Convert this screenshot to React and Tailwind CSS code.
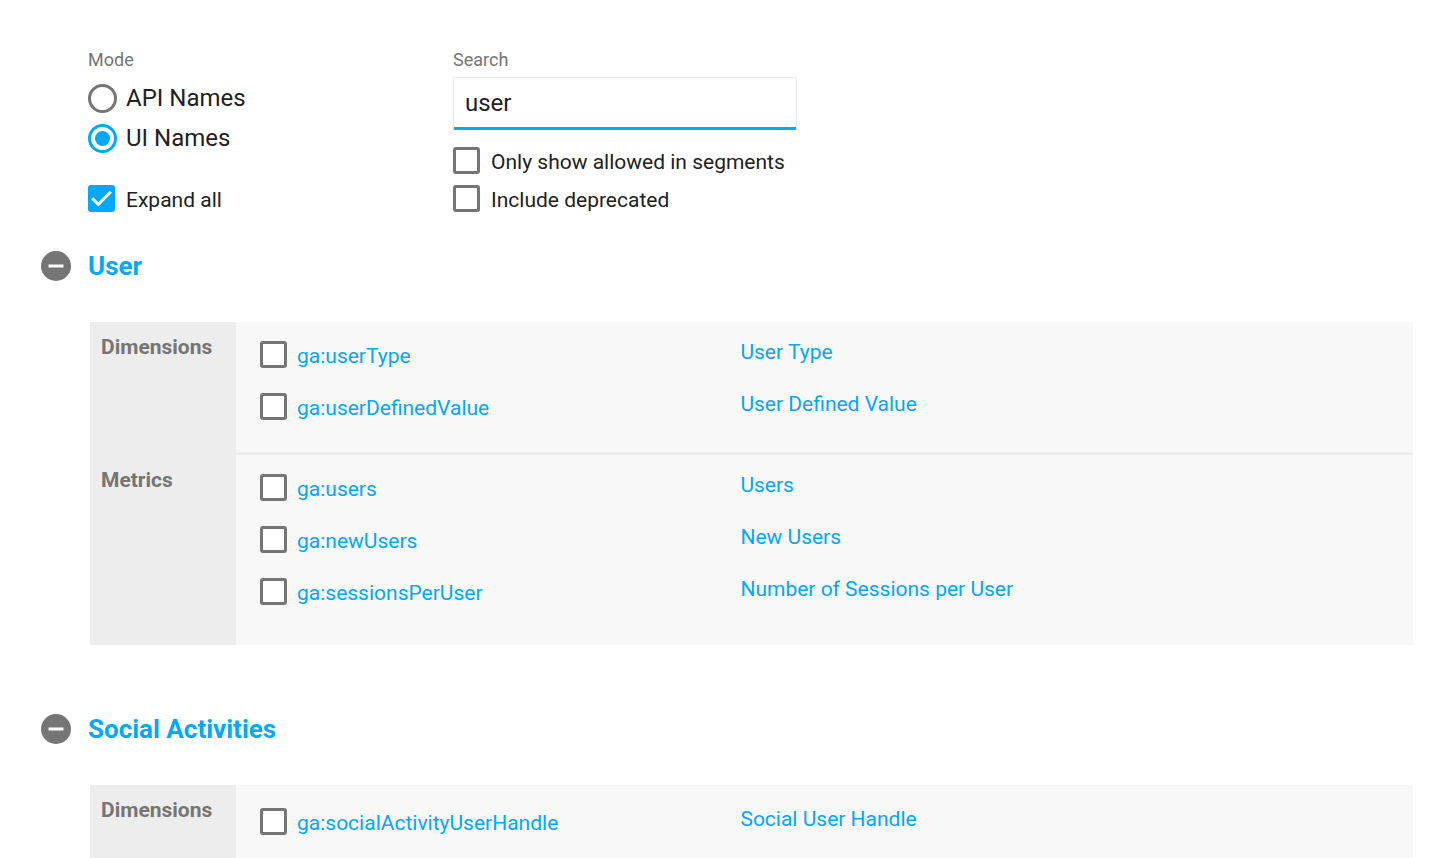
import { useState } from 'react';

const initialGroups = [
  {
    title: 'User',
    sections: [
      {
        label: 'Dimensions',
        items: [
          { id: 'ga:userType', name: 'User Type' },
          { id: 'ga:userDefinedValue', name: 'User Defined Value' },
        ],
      },
      {
        label: 'Metrics',
        items: [
          { id: 'ga:users', name: 'Users' },
          { id: 'ga:newUsers', name: 'New Users' },
          { id: 'ga:sessionsPerUser', name: 'Number of Sessions per User' },
        ],
      },
    ],
  },
  {
    title: 'Social Activities',
    sections: [
      {
        label: 'Dimensions',
        items: [{ id: 'ga:socialActivityUserHandle', name: 'Social User Handle' }],
      },
    ],
  },
];

function Checkbox(props) {
  return (
    <span className="relative block size-[27px] shrink-0">
      <input
        type="checkbox"
        className="peer block size-[27px] appearance-none rounded-[3px] border-3 border-[#757575] bg-white checked:border-[#03a9f4] checked:bg-[#03a9f4]"
        {...props}
      />
      <svg
        viewBox="0 0 27 27"
        className="pointer-events-none absolute inset-0 hidden size-[27px] peer-checked:block"
        fill="none"
        stroke="#fff"
        strokeWidth="3"
        aria-hidden="true"
      >
        <path d="M4.2 13.2 10.3 19.3 22.8 6.8" />
      </svg>
    </span>
  );
}

function LabeledCheckbox({ children, ...props }) {
  return (
    <label className="flex w-fit items-start gap-[11px] text-[21px] leading-[30px] whitespace-nowrap">
      <Checkbox {...props} />
      {children}
    </label>
  );
}

function ModeRadio({ value, mode, onChange, children }) {
  return (
    <label className="flex h-10 w-fit items-center gap-[9px] text-[24px] leading-[30px]">
      <span className="relative block size-[29px] shrink-0">
        <input
          type="radio"
          name="mode"
          value={value}
          checked={mode === value}
          onChange={() => onChange(value)}
          className="peer block size-[29px] appearance-none rounded-full border-3 border-[#757575] checked:border-[#03a9f4]"
        />
        <span className="pointer-events-none absolute inset-[7px] hidden rounded-full bg-[#03a9f4] peer-checked:block" />
      </span>
      {children}
    </label>
  );
}

function FieldRow({ id, name }) {
  return (
    <li className="flex h-[52px] items-start">
      <div className="flex w-5/12 items-start gap-[10px]">
        <Checkbox id={id} />
        <label htmlFor={id} className="leading-[30px]">
          <a href={`#${id}`}>{id}</a>
        </label>
      </div>
      <a href={`#${id}`} className="leading-[22px]">
        {name}
      </a>
    </li>
  );
}

function Group({ title, sections, open, onToggle }) {
  return (
    <section>
      <div className="flex items-center gap-[17px]">
        <button type="button" aria-label={`Toggle ${title}`} aria-expanded={open} onClick={onToggle}>
          <svg viewBox="0 0 30 30" className="block size-[30px]" aria-hidden="true">
            <circle cx="15" cy="15" r="15" fill="#757575" />
            <path d={open ? 'M7.5 15h15' : 'M7.5 15h15M15 7.5v15'} stroke="#fff" strokeWidth="3" />
          </svg>
        </button>
        <h2 className="text-[26px] leading-[30px] font-bold text-[#03a9f4]">
          <a href={`#${title}`}>{title}</a>
        </h2>
      </div>
      {open && (
        <div className="mt-[41px] pl-[49px]">
          <table className="w-full border-collapse text-[21px]">
            <tbody>
              {sections.map((section) => (
                <tr key={section.label} className="group align-top">
                  <th
                    scope="row"
                    className="w-[146px] bg-[#ededed] pt-[13px] pl-[11px] text-left leading-[24px] font-bold text-[#757575]"
                  >
                    {section.label}
                  </th>
                  <td className="bg-[#f8f8f8] p-0">
                    <ul className="border-b-3 border-[#ededed] pt-[19px] pb-[7px] pl-6 text-[#03a9f4] group-last:border-b-0 group-last:pb-[15px] group-only:pt-[23px]">
                      {section.items.map((item) => (
                        <FieldRow key={item.id} {...item} />
                      ))}
                    </ul>
                  </td>
                </tr>
              ))}
            </tbody>
          </table>
        </div>
      )}
    </section>
  );
}

export default function App() {
  const [mode, setMode] = useState('ui');
  const [search, setSearch] = useState('user');
  const [closed, setClosed] = useState([]);

  const toggle = (title) =>
    setClosed((prev) => (prev.includes(title) ? prev.filter((t) => t !== title) : [...prev, title]));

  return (
    <main className="bg-white pt-[50px] pr-[39px] pl-[41px] font-[Roboto,sans-serif] text-[#212121]">
      <div className="flex pl-[47px]">
        <fieldset className="w-[365px] shrink-0">
          <legend className="mb-2 text-[18px] leading-[20px] text-[#757575]">Mode</legend>
          <ModeRadio value="api" mode={mode} onChange={setMode}>
            API Names
          </ModeRadio>
          <ModeRadio value="ui" mode={mode} onChange={setMode}>
            UI Names
          </ModeRadio>
          <div className="mt-[27px]">
            <LabeledCheckbox
              checked={closed.length === 0}
              onChange={(e) => setClosed(e.target.checked ? [] : initialGroups.map((g) => g.title))}
            >
              Expand all
            </LabeledCheckbox>
          </div>
        </fieldset>

        <div className="w-[344px]">
          <label htmlFor="search" className="block text-[18px] leading-[20px] text-[#757575]">
            Search
          </label>
          <input
            id="search"
            type="text"
            value={search}
            onChange={(e) => setSearch(e.target.value)}
            className="mt-[7px] block h-[53px] w-full rounded-[2px] border border-b-3 border-[#ebebeb] border-b-[#03a9f4] px-[11px] text-[24px] outline-none"
          />
          <div className="mt-[17px] flex flex-col gap-2">
            <LabeledCheckbox>Only show allowed in segments</LabeledCheckbox>
            <LabeledCheckbox>Include deprecated</LabeledCheckbox>
          </div>
        </div>
      </div>

      <div className="mt-9 flex flex-col gap-[69px]">
        {initialGroups.map((group) => (
          <Group
            key={group.title}
            {...group}
            open={!closed.includes(group.title)}
            onToggle={() => toggle(group.title)}
          />
        ))}
      </div>
    </main>
  );
}
